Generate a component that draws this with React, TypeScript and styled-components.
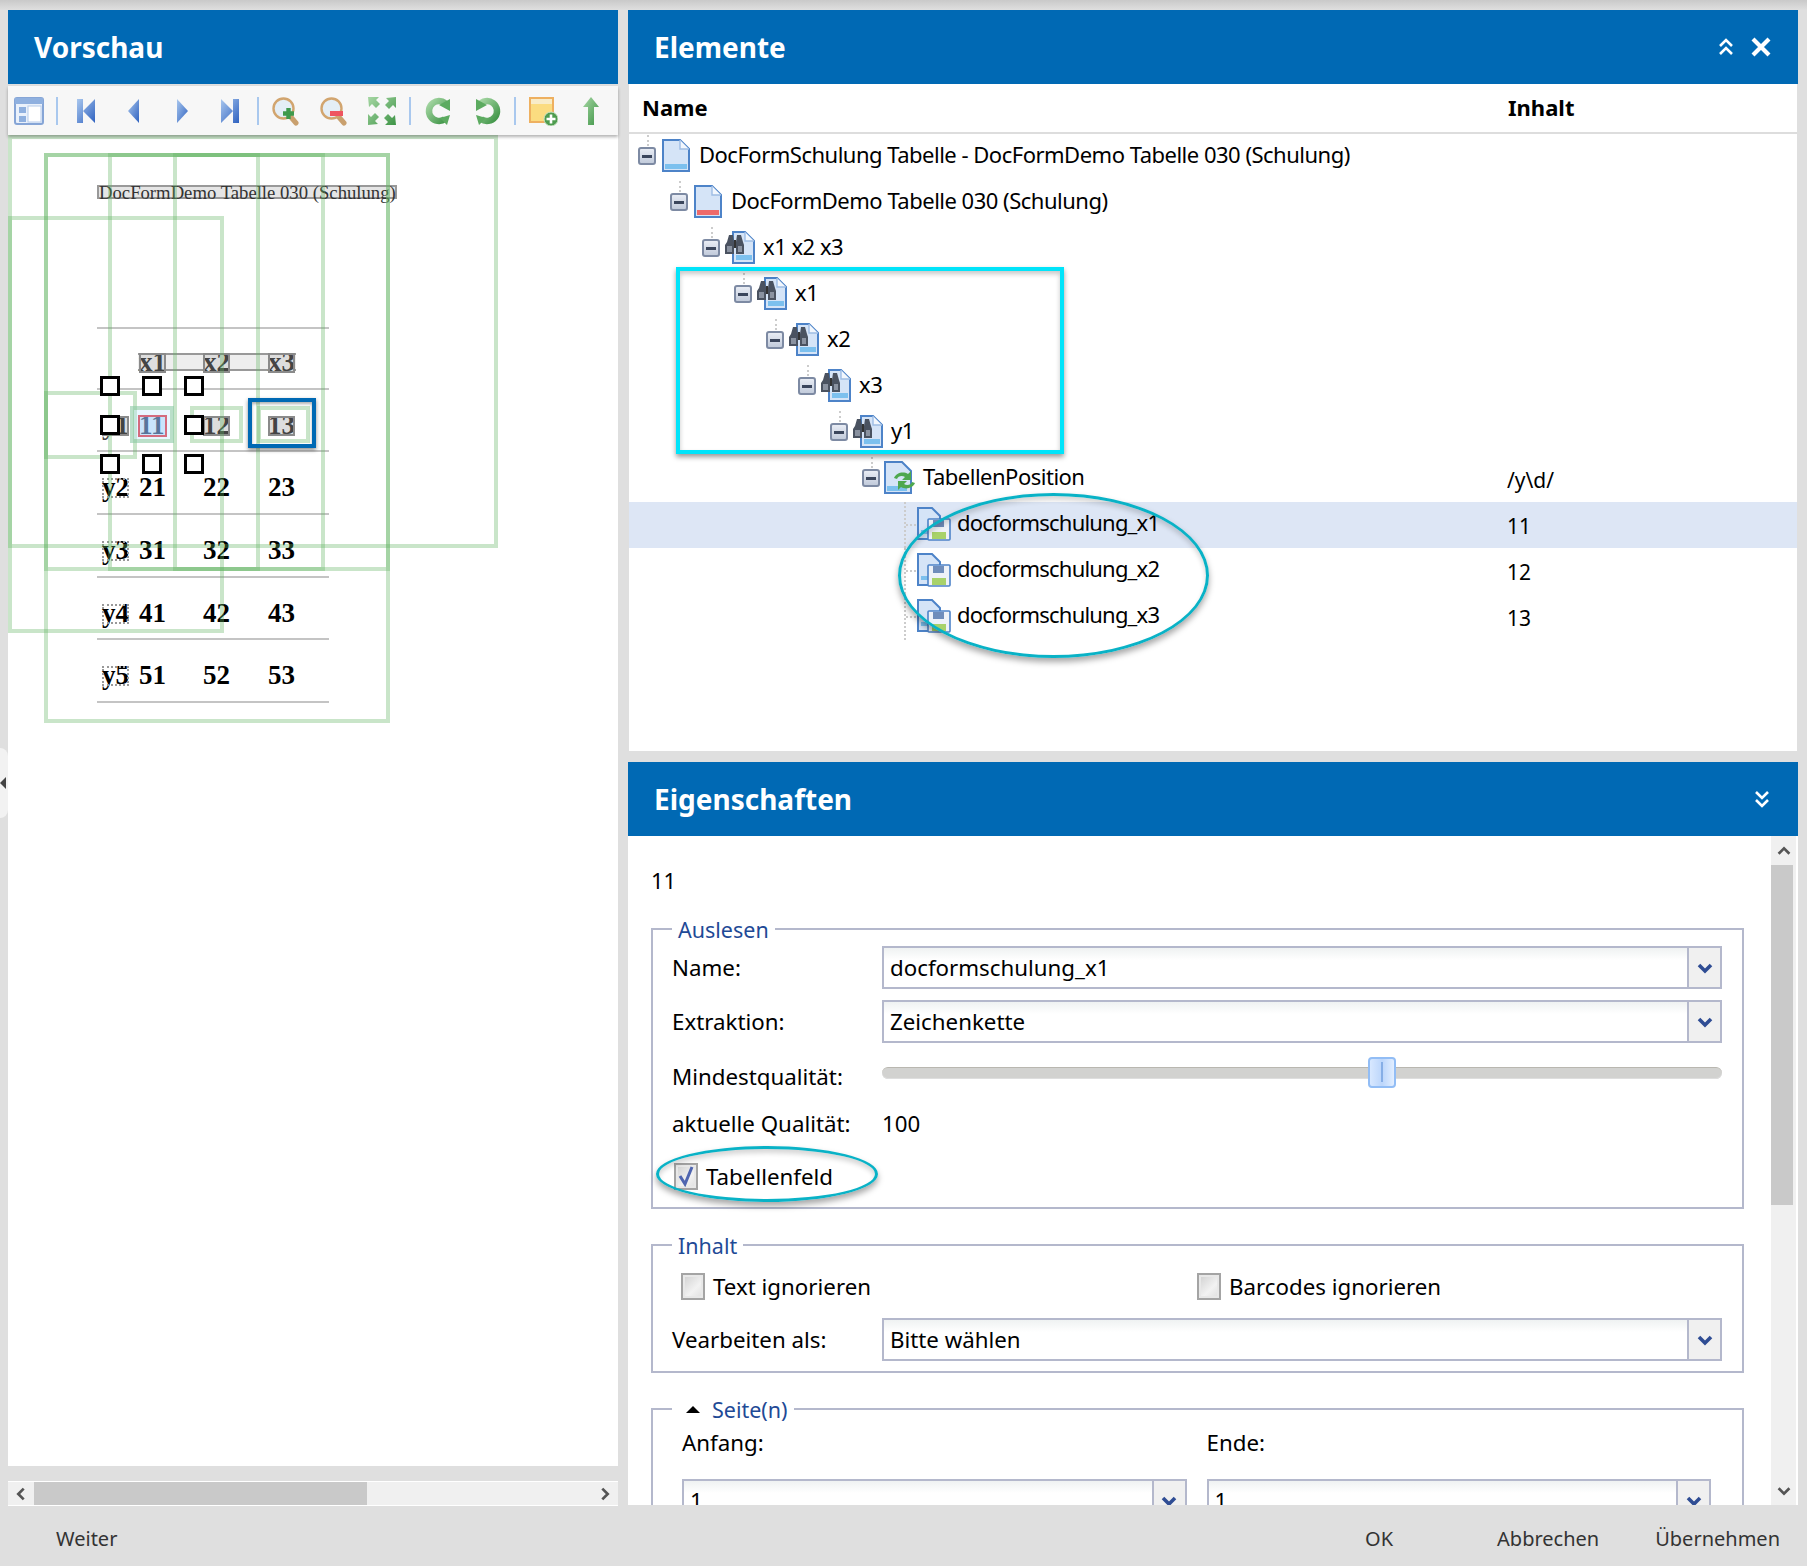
import React from "react";
import styled, { createGlobalStyle } from "styled-components";

const Global = createGlobalStyle`
  html, body { margin: 0; padding: 0; background: #dfdfdf; }
  * { box-sizing: border-box; }
  body { font-family: "Noto Sans", "Open Sans", sans-serif; color: #000; }
`;

const Root = styled.div`
  position: relative; width: 1807px; height: 1566px; overflow: hidden;
  display: flex; flex-direction: column;
  background: linear-gradient(#c9c9c9 0, #dfdfdf 10px);
`;
const Main = styled.div`display: flex; height: 1505px; padding: 10px 9px 0 8px; gap: 10px;`;
const LeftCol = styled.div`width: 610px; display: flex; flex-direction: column;`;
const RightCol = styled.div`width: 1170px; display: flex; flex-direction: column;`;
const Header = styled.div`
  height: 74px; flex: none; background: #0069b4; color: #fff; display: flex; align-items: center;
  padding: 0 26px 0 26px; font: 700 28px "Noto Sans", sans-serif; justify-content: space-between;
`;
const LowerHeader = styled(Header)`margin-top: 11px;`;
const HeaderTools = styled.div`display: flex; align-items: center; gap: 14px;`;
const Toolbar = styled.div`
  height: 49px; margin-top: 2px; flex: none; background: #f7f7f7; display: flex; align-items: center; padding-left: 6px;
  box-shadow: 0 2px 3px rgba(0,0,0,.3); position: relative; z-index: 2;
`;
const ToolIcon = styled.svg<{ $gap?: boolean }>`
  width: 30px; height: 30px; flex: none; margin-left: ${p => (p.$gap ? "18px" : "0")}; filter: blur(.4px);
`;
const ToolSep = styled.div`width: 2px; height: 28px; background: #a9c8ee; margin: 0 12.5px 0 12px; flex: none;`;
const Canvas = styled.div`position: relative; height: 1331px; flex: none; background: #fff; overflow: hidden;`;
const GreenBox = styled.div<{ $x: number; $y: number; $w: number; $h: number; $fill?: boolean }>`
  position: absolute; left: ${p => p.$x - 8}px; top: ${p => p.$y - 135}px; width: ${p => p.$w}px; height: ${p => p.$h}px;
  border: 4px solid rgba(96, 178, 96, .34); background: ${p => (p.$fill ? "rgba(190,230,255,.35)" : "transparent")};
`;
const BlueBox = styled.div`
  position: absolute; left: 240px; top: 263px; width: 68px; height: 50px; border: 4px solid #0069b4;
  box-shadow: 0 2px 4px rgba(0,0,0,.45), inset 0 2px 3px rgba(0,0,0,.3);
`;
const DocTitle = styled.div`
  position: absolute; left: 89px; top: 50px; width: 300px; height: 14px; border: 2px solid #999; background: rgba(0,0,0,.1);
  font: 18.7px/12px "Liberation Serif", serif; color: #333; white-space: nowrap; text-align: center;
`;
const Table = styled.div`position: absolute; left: 89px; top: 192px; width: 232px; font: 700 27px "Liberation Serif", serif;`;
const TableRow = styled.div<{ $top?: boolean }>`
  height: 62.67px; display: grid; grid-template-columns: 37px 64px 65px 1fr; padding-left: 5px; padding-top: ${p => (p.$top ? 24 : 26)}px;
  border-bottom: 2px solid #c4c4c4; ${p => (p.$top ? "border-top: 2px solid #c4c4c4;" : "")}
`;
const Cell = styled.div<{ $kind?: "plain" | "label" | "gray" | "sel" }>`
  width: 27px; height: 20px; line-height: 19px; white-space: nowrap;
  ${p => p.$kind === "label" ? "outline: 2px dotted #999; outline-offset: -2px;" : ""}
  ${p => p.$kind === "gray" ? "outline: 2px solid #8a8a8a; outline-offset: -2px; color: #444; background: #ddd;" : ""}
  ${p => p.$kind === "sel" ? "outline: 2px solid #e02a3a; outline-offset: -1px; color: #223a66; background: #cfe3fb;" : ""}
`;
const HeadStrip = styled.div`
  position: absolute; left: 130px; top: 218px; width: 158px; height: 18px; background: #eee; border: 2px solid #999;
  border-width: 2px 0;
`;
const Handle = styled.div<{ $x: number; $y: number }>`
  position: absolute; left: ${p => p.$x - 8}px; top: ${p => p.$y - 135}px; width: 20px; height: 20px; border: 3px solid #000; background: #fff;
`;
const HScroll = styled.div`
  height: 25px; margin-top: 15px; flex: none; background: #f0f0f0; display: flex; align-items: center; border-top: 1px solid #fff; border-bottom: 1px solid #fff;
`;
const ScrollBtn = styled.div`width: 26px; height: 100%; display: flex; align-items: center; justify-content: center; flex: none;`;
const HThumb = styled.div`width: 333px; height: 100%; background: #c9c9c9;`;
const Spacer = styled.div`flex: 1;`;

const TreePanel = styled.div`height: 667px; flex: none; background: #fff; margin-left: 1px; margin-right: 1px; position: relative;`;
const TreeHead = styled.div`
  height: 50px; display: grid; grid-template-columns: 878px 1fr; align-items: center; border-bottom: 2px solid #ddd;
  font: 700 22px "Noto Sans", sans-serif; padding: 0 0 2px 13px;
`;
const TreeHeadValue = styled.div`margin-left: -12px;`;
const TreeRow = styled.div<{ $selected?: boolean }>`
  height: 46px; display: grid; grid-template-columns: 878px 1fr; align-items: center;
  background: ${p => (p.$selected ? "#dde6f5" : "transparent")}; font-size: 22px; letter-spacing: -.5px; white-space: nowrap;
`;
const TreeName = styled.div<{ $level: number }>`
  display: flex; align-items: center; height: 100%; padding-left: ${p => 9 + p.$level * 32}px;
`;
const TreeText = styled.span<{ $tight?: boolean }>`margin-bottom: 6px; ${p => (p.$tight ? "letter-spacing: -.8px;" : "")}`;
const ToggleWrap = styled.div`
  position: relative; width: 18px; height: 18px; flex: none; border-radius: 3px; border: 2px solid #7d8aa3;
  background: linear-gradient(#e8ecf4, #c2cbdb); display: flex; align-items: center; justify-content: center; margin-bottom: 2px;
  &::before { content: ""; position: absolute; left: 7px; top: -14px; height: 11px; border-left: 2px dotted #ccc; }
  &::after { content: ""; width: 10px; height: 3px; background: #3b465c; }
`;
const NodeIcon = styled.svg`width: 32px; height: 34px; flex: none; margin: 0 7px 2px 4px; filter: blur(.3px);`;
const Connector = styled.div`
  width: 24px; height: 100%; flex: none; margin-left: 10px; position: relative;
  border-left: 2px dotted #ccc;
  &::after { content: ""; position: absolute; left: 0; top: 22px; width: 14px; border-top: 2px dotted #ccc; }
`;
const LeafIcon = styled.svg`width: 34px; height: 34px; flex: none; margin: 0 6px 2px -11px; filter: blur(.3px);`;
const TreeValue = styled.div`font-size: 21px; letter-spacing: 0; padding-top: 1px;`;

const Form = styled.div`flex: 1; position: relative; background: #fff; display: flex; overflow: hidden;`;
const FormScroll = styled.div`flex: 1; padding: 30px 27px 0 23px; min-width: 0; height: 900px;`;
const ValueLine = styled.div`height: 28px; line-height: 28px; font-size: 22px; margin-bottom: 23px;`;
const Group = styled.fieldset<{ $pb: number }>`
  margin: 0 0 24px; padding: 5px 20px ${p => p.$pb}px 19px; min-width: 0; border: 2px solid #b4b8cc;
`;
const Legend = styled.legend`
  margin-left: 0; padding: 0 6px; height: 24px; line-height: 21px; font-size: 21.5px; color: #1f4a96; display: flex; align-items: center; gap: 12px;
`;
const Triangle = styled.span`
  width: 0; height: 0; border-left: 7px solid transparent; border-right: 7px solid transparent; border-bottom: 7px solid #000; margin-left: 8px;
`;
const FormRow = styled.div<{ $h: number; $mt?: number }>`
  display: grid; grid-template-columns: 210px 1fr; align-items: center; height: ${p => p.$h}px; margin-top: ${p => p.$mt ?? 0}px; font-size: 22.3px;
`;
const Select = styled.div`
  height: 43px; border: 2px solid #b4b8cc; display: flex; align-items: center; font-size: 22.3px;
  background: linear-gradient(#eff2f2, #fff 12px); padding-left: 6px;
`;
const SelectText = styled.div`flex: 1; line-height: 38px; height: 38px;`;
const SelectBtn = styled.div`
  width: 33px; height: 100%; flex: none; background: #f0f0f0; border-left: 2px solid #b4b8cc; display: flex; align-items: center; justify-content: center;
`;
const Track = styled.div`
  position: relative; height: 12px; margin-top: -8px; border-radius: 6px; background: #d2d2d0; border-top: 1px solid #b9b7b0; box-shadow: inset 0 -1px 0 #dedede;
`;
const Thumb = styled.div`
  position: absolute; left: 486px; top: -11px; width: 28px; height: 31px; border-radius: 4px; border: 2px solid #92bdf5;
  background: linear-gradient(90deg, #d8e8ff, #bcd6fb 50%, #e2eeff); display: flex; justify-content: center; align-items: center;
  &::after { content: ""; width: 2px; height: 20px; background: #86aee6; }
`;
const CheckRow = styled.div<{ $ml?: number; $mt?: number }>`
  display: flex; align-items: center; gap: 8px; font-size: 22.3px; margin-left: ${p => p.$ml ?? 0}px; margin-top: ${p => p.$mt ?? 0}px; height: 28px;
`;
const Check = styled.div`
  width: 24px; height: 27px; flex: none; border: 2px solid #a4a4a4; background: linear-gradient(135deg, #cfcfcf, #f2f2f2 60%, #dedede);
  box-shadow: inset 0 0 0 2px #e8e8e8; display: flex; align-items: center; justify-content: center;
`;
const TwoCol = styled.div`display: grid; grid-template-columns: 1fr 1fr; column-gap: 20px; margin: 3px 11px 0 10px;`;
const CheckCols = styled.div`display: grid; grid-template-columns: 516px 1fr; margin: 10px 0 18px 9px;`;
const Label = styled.div`height: 28px; line-height: 28px; font-size: 22.3px; margin-bottom: 22px;`;
const PageCol = styled.div``;
const VScroll = styled.div`
  width: 25px; flex: none; margin-right: 2px; background: #f0f0f0; display: flex; flex-direction: column; align-items: stretch;
`;
const VBtn = styled.div`height: 29px; flex: none; display: flex; align-items: center; justify-content: center;`;
const VThumb = styled.div`height: 340px; flex: none; background: #c9c9c9; margin-right: 3px;`;

const Footer = styled.div`
  height: 61px; display: flex; align-items: center; padding: 5px 27px 0 56px; font-size: 20px; color: #333;
`;
const FooterBtn = styled.div<{ $ml: number }>`margin-left: ${p => p.$ml}px;`;

const CyanRect = styled.div`
  position: absolute; left: 676px; top: 267px; width: 388px; height: 187px; border: 4px solid #00e4fa;
  box-shadow: 0 3px 5px rgba(0,0,0,.4), inset 0 3px 5px rgba(0,0,0,.22);
`;
const Oval = styled.div<{ $x: number; $y: number; $w: number; $h: number }>`
  position: absolute; left: ${p => p.$x}px; top: ${p => p.$y}px; width: ${p => p.$w}px; height: ${p => p.$h}px; border-radius: 50%;
  border: 3px solid #09b2c6; box-shadow: 0 4px 6px rgba(0,0,0,.35), inset 0 4px 5px rgba(0,0,0,.16);
`;
const SideHandle = styled.div`
  position: absolute; left: 0; top: 748px; width: 8px; height: 70px; background: #f2f2f2; border-radius: 0 8px 8px 0;
  display: flex; align-items: center;
  &::after { content: ""; border-right: 6px solid #444; border-top: 6px solid transparent; border-bottom: 6px solid transparent; }
`;

const Chevron = ({ d = "down", c = "#2f4d94", s = 20, w = 3.6 }: { d?: "up" | "down" | "left" | "right"; c?: string; s?: number; w?: number }) => {
  const pts = { down: "4,7 10,13 16,7", up: "4,13 10,7 16,13", left: "13,4 7,10 13,16", right: "7,4 13,10 7,16" }[d];
  return <svg width={s} height={s} viewBox="0 0 20 20"><polyline points={pts} fill="none" stroke={c} strokeWidth={w} /></svg>;
};
const DoubleChev = ({ up }: { up?: boolean }) => (
  <svg width="20" height="20" viewBox="0 0 20 20" fill="none" stroke="#fff" strokeWidth="2.6">
    {up ? <><polyline points="4,9 10,3 16,9" /><polyline points="4,17 10,11 16,17" /></> : <><polyline points="4,3 10,9 16,3" /><polyline points="4,11 10,17 16,11" /></>}
  </svg>
);
const CloseX = () => (
  <svg width="22" height="22" viewBox="0 0 22 22" stroke="#fff" strokeWidth="4.2"><path d="M3 3L19 19M19 3L3 19" /></svg>
);

const BlueGrad = ({ id }: { id: string }) => (
  <defs><linearGradient id={id} x1="0" y1="0" x2="1" y2="1"><stop offset="0" stopColor="#a9c7ee" /><stop offset="1" stopColor="#2f62c0" /></linearGradient></defs>
);
const GreenGrad = ({ id }: { id: string }) => (
  <defs><linearGradient id={id} x1="0" y1="0" x2="1" y2="1"><stop offset="0" stopColor="#a6d7a4" /><stop offset="1" stopColor="#3e9446" /></linearGradient></defs>
);

const Glass = ({ minus, gap }: { minus?: boolean; gap?: boolean }) => (
  <ToolIcon viewBox="0 0 30 30" $gap={gap}>
    <path d="M19 20l6 7" stroke="#c9a06e" strokeWidth="5" strokeLinecap="round" />
    <circle cx="12.5" cy="12.5" r="10" fill="#e4eef6" stroke="#d2a56f" strokeWidth="2.4" />
    {minus
      ? <rect x="11" y="15" width="13" height="5" fill="#ee5560" />
      : <path d="M17.5 12v11M12 17.5h11" stroke="#3f9a4d" strokeWidth="4.4" />}
  </ToolIcon>
);

const Doc = ({ stripe = "#7cc0ee" }: { stripe?: string }) => (
  <NodeIcon viewBox="0 0 32 34">
    <path d="M3 1h17l9 9v22H3z" fill="#d5e4f7" stroke="#4d83c8" strokeWidth="2" />
    <path d="M20 1v9h9" fill="#f2f7fd" stroke="#9ebde4" strokeWidth="1.4" />
    <rect x="5" y="25" width="22" height="5" fill={stripe} />
  </NodeIcon>
);
const Bino = () => (
  <NodeIcon viewBox="0 0 32 34">
    <path d="M9 1h12l9 9v22H9z" fill="#d5e4f7" stroke="#4d83c8" strokeWidth="2" />
    <path d="M21 1v9h9" fill="#f2f7fd" stroke="#9ebde4" strokeWidth="1.4" />
    <rect x="12" y="24" width="16" height="5" fill="#7cc0ee" />
    <path d="M3 11l2-7h4l1 7v12H1V14zM12 11l1-7h4l2 7 1 3v9h-8z" fill="#4a5260" />
    <rect x="3" y="15" width="5" height="6" fill="#8a92a0" /><rect x="14" y="15" width="4" height="6" fill="#8a92a0" />
    <rect x="10" y="9" width="2" height="8" fill="#333" />
  </NodeIcon>
);
const DocArrows = () => (
  <NodeIcon viewBox="0 0 32 34">
    <path d="M1 1h17l9 9v22H1z" fill="#d5e4f7" stroke="#4d83c8" strokeWidth="2" />
    <rect x="3" y="25" width="20" height="5" fill="#7cc0ee" />
    <path d="M10 17c2-5 9-7 14-4l3-3v9h-9l3-3c-3-2-7-1-8 2z" fill="#4ea84f" />
    <path d="M31 22c-2 5-9 7-14 4l-3 3v-9h9l-3 3c3 2 7 1 8-2z" fill="#4ea84f" />
  </NodeIcon>
);
const DocDisk = () => (
  <LeafIcon viewBox="0 0 34 34">
    <path d="M1 1h14l8 8v23H1z" fill="#d5e4f7" stroke="#4d83c8" strokeWidth="2" />
    <rect x="4" y="23" width="10" height="4" fill="#7cc0ee" />
    <rect x="11" y="12" width="22" height="21" rx="1" fill="#eef2f8" stroke="#4d83c8" strokeWidth="1.6" />
    <rect x="16" y="13" width="11" height="7" fill="#6f8dbb" />
    <rect x="15" y="25" width="14" height="7" fill="#a8d26a" />
  </LeafIcon>
);

const rows = [
  ["y2", "21", "22", "23"], ["y3", "31", "32", "33"], ["y4", "41", "42", "43"], ["y5", "51", "52", "53"],
];
const boxes = [
  { x: 8, y: 135, w: 490, h: 413 }, { x: 44, y: 153, w: 346, h: 570 }, { x: 44, y: 153, w: 346, h: 418 },
  { x: 108, y: 153, w: 152, h: 418 }, { x: 173, y: 153, w: 152, h: 418 }, { x: 8, y: 216, w: 216, h: 417 },
  { x: 44, y: 391, w: 93, h: 68 }, { x: 190, y: 406, w: 53, h: 37 }, { x: 257, y: 406, w: 53, h: 37 },
];
const handles = [
  [100, 376], [142, 376], [184, 376], [100, 415], [184, 415], [100, 454], [142, 454], [184, 454],
];

const treeRows: { level: number; text: string; icon: React.ReactNode; value?: string }[] = [
  { level: 0, text: "DocFormSchulung Tabelle - DocFormDemo Tabelle 030 (Schulung)", icon: <Doc /> },
  { level: 1, text: "DocFormDemo Tabelle 030 (Schulung)", icon: <Doc stripe="#ee6a6a" /> },
  { level: 2, text: "x1 x2 x3", icon: <Bino /> },
  { level: 3, text: "x1", icon: <Bino /> },
  { level: 4, text: "x2", icon: <Bino /> },
  { level: 5, text: "x3", icon: <Bino /> },
  { level: 6, text: "y1", icon: <Bino /> },
  { level: 7, text: "TabellenPosition", icon: <DocArrows />, value: "/y\\d/" },
];
const leaves = [["docformschulung_x1", "11"], ["docformschulung_x2", "12"], ["docformschulung_x3", "13"]];

const Drop = ({ text }: { text: string }) => (
  <Select>
    <SelectText>{text}</SelectText>
    <SelectBtn><Chevron /></SelectBtn>
  </Select>
);

export default function App() {
  return (
    <Root>
      <Global />
      <Main>
        <LeftCol>
          <Header>Vorschau</Header>
          <Toolbar>
            <ToolIcon viewBox="0 0 30 30">
              <rect x="1" y="2" width="28" height="26" rx="2" fill="#eaf1fb" stroke="#86a5d6" strokeWidth="2" />
              <rect x="1" y="2" width="28" height="6" fill="#8fb0df" />
              <rect x="5" y="11" width="7" height="6" fill="#8fb0df" /><rect x="5" y="20" width="7" height="6" fill="#8fb0df" />
              <rect x="14" y="10" width="13" height="16" fill="#fff" stroke="#b6cbea" />
            </ToolIcon>
            <ToolSep />
            <ToolIcon viewBox="0 0 30 30"><BlueGrad id="b1" /><path d="M6 3h6v24H6zM24 3v24L12 15z" fill="url(#b1)" /></ToolIcon>
            <ToolIcon viewBox="0 0 30 30" $gap><BlueGrad id="b2" /><path d="M20 3v24L9 15z" fill="url(#b2)" /></ToolIcon>
            <ToolIcon viewBox="0 0 30 30" $gap><BlueGrad id="b3" /><path d="M10 3v24l11-12z" fill="url(#b3)" /></ToolIcon>
            <ToolIcon viewBox="0 0 30 30" $gap><BlueGrad id="b4" /><path d="M24 3h-6v24h6zM6 3v24l12-12z" fill="url(#b4)" /></ToolIcon>
            <ToolSep />
            <Glass />
            <Glass minus gap />
            <ToolIcon viewBox="0 0 30 30" $gap>
              <GreenGrad id="g1" />
              <path d="M1 1h11l-3 3 4 4-4 4-4-4-3 3zM29 1v11l-3-3-4 4-4-4 4-4-3-3zM1 29V18l3 3 4-4 4 4-4 4 3 3zM29 29H18l3-3-4-4 4-4 4 4 3-3z" fill="url(#g1)" />
            </ToolIcon>
            <ToolSep />
            <ToolIcon viewBox="0 0 30 30">
              <GreenGrad id="g2" />
              <path d="M23 9A10 10 0 1 0 21 23" fill="none" stroke="url(#g2)" strokeWidth="6.5" />
              <path d="M15 9L26 3v12zM16 22l10-3-3 10z" fill="#5cab60" />
            </ToolIcon>
            <ToolIcon viewBox="0 0 30 30" $gap>
              <GreenGrad id="g3" />
              <path d="M7 9A10 10 0 1 1 9 23" fill="none" stroke="url(#g3)" strokeWidth="6.5" />
              <path d="M15 9L4 3v12zM14 22L4 19l3 10z" fill="#5cab60" />
            </ToolIcon>
            <ToolSep />
            <ToolIcon viewBox="0 0 30 30">
              <rect x="2" y="2" width="23" height="24" fill="#fbdc80" stroke="#eeb060" strokeWidth="2" />
              <rect x="3" y="3" width="21" height="5" fill="#f8ecc8" />
              <circle cx="23" cy="23" r="7" fill="#4e9c4f" stroke="#c9e2c4" />
              <path d="M23 18.5v9M18.5 23h9" stroke="#fff" strokeWidth="2.6" />
            </ToolIcon>
            <ToolIcon viewBox="0 0 30 30" $gap>
              <GreenGrad id="g4" />
              <path d="M15 1l8 10h-5v18h-6V11H7z" fill="url(#g4)" />
            </ToolIcon>
          </Toolbar>
          <Canvas>
            <DocTitle>DocFormDemo Tabelle 030 (Schulung)</DocTitle>
            <HeadStrip />
            <Table>
              <TableRow $top>
                <span />
                <Cell $kind="gray">x1</Cell><Cell $kind="gray">x2</Cell><Cell $kind="gray">x3</Cell>
              </TableRow>
              <TableRow>
                <Cell $kind="gray">y1</Cell>
                <Cell $kind="sel">11</Cell><Cell $kind="gray">12</Cell><Cell $kind="gray">13</Cell>
              </TableRow>
              {rows.map(r => (
                <TableRow key={r[0]}>
                  <Cell $kind="label">{r[0]}</Cell>
                  <Cell>{r[1]}</Cell><Cell>{r[2]}</Cell><Cell>{r[3]}</Cell>
                </TableRow>
              ))}
            </Table>
            {boxes.map((b, i) => <GreenBox key={i} $x={b.x} $y={b.y} $w={b.w} $h={b.h} />)}
            <GreenBox $x={130} $y={406} $w={44} $h={37} $fill />
            <BlueBox />
            {handles.map(([x, y]) => <Handle key={`${x}-${y}`} $x={x} $y={y} />)}
          </Canvas>
          <HScroll>
            <ScrollBtn><Chevron d="left" c="#555" s={18} w={3} /></ScrollBtn>
            <HThumb />
            <Spacer />
            <ScrollBtn><Chevron d="right" c="#555" s={18} w={3} /></ScrollBtn>
          </HScroll>
        </LeftCol>
        <RightCol>
          <Header>
            Elemente
            <HeaderTools><DoubleChev up /><CloseX /></HeaderTools>
          </Header>
          <TreePanel>
            <TreeHead>
              <div>Name</div>
              <TreeHeadValue>Inhalt</TreeHeadValue>
            </TreeHead>
            {treeRows.map(r => (
              <TreeRow key={r.level}>
                <TreeName $level={r.level}>
                  <ToggleWrap />
                  {r.icon}
                  <TreeText>{r.text}</TreeText>
                </TreeName>
                {r.value && <TreeValue>{r.value}</TreeValue>}
              </TreeRow>
            ))}
            {leaves.map((l, i) => (
              <TreeRow key={l[0]} $selected={i === 0}>
                <TreeName $level={8}>
                  <Connector />
                  <DocDisk />
                  <TreeText $tight>{l[0]}</TreeText>
                </TreeName>
                <TreeValue>{l[1]}</TreeValue>
              </TreeRow>
            ))}
          </TreePanel>
          <LowerHeader>
            Eigenschaften
            <HeaderTools><DoubleChev /></HeaderTools>
          </LowerHeader>
          <Form>
            <FormScroll>
              <ValueLine>11</ValueLine>
              <Group $pb={17}>
                <Legend>Auslesen</Legend>
                <FormRow $h={43}><div>Name:</div><Drop text="docformschulung_x1" /></FormRow>
                <FormRow $h={43} $mt={11}><div>Extraktion:</div><Drop text="Zeichenkette" /></FormRow>
                <FormRow $h={47} $mt={10}><div>Mindestqualität:</div><Track><Thumb /></Track></FormRow>
                <FormRow $h={47}><div>aktuelle Qualität:</div><div>100</div></FormRow>
                <CheckRow $ml={2} $mt={15}>
                  <Check><svg width="18" height="22" viewBox="0 0 18 22"><path d="M3 11l5 8 7-17" fill="none" stroke="#4f65b0" strokeWidth="3" /></svg></Check>
                  Tabellenfeld
                </CheckRow>
              </Group>
              <Group $pb={11}>
                <Legend>Inhalt</Legend>
                <CheckCols>
                  <CheckRow><Check />Text ignorieren</CheckRow>
                  <CheckRow><Check />Barcodes ignorieren</CheckRow>
                </CheckCols>
                <FormRow $h={42}><div>Vearbeiten als:</div><Drop text="Bitte wählen" /></FormRow>
              </Group>
              <Group $pb={8}>
                <Legend><Triangle />Seite(n)</Legend>
                <TwoCol>
                  <PageCol><Label>Anfang:</Label><Drop text="1" /></PageCol>
                  <PageCol><Label>Ende:</Label><Drop text="1" /></PageCol>
                </TwoCol>
              </Group>
            </FormScroll>
            <VScroll>
              <VBtn><Chevron d="up" c="#555" s={18} w={3} /></VBtn>
              <VThumb />
              <Spacer />
              <VBtn><Chevron d="down" c="#555" s={18} w={3} /></VBtn>
            </VScroll>
          </Form>
        </RightCol>
      </Main>
      <Footer>
        Weiter
        <Spacer />
        <FooterBtn $ml={0}>OK</FooterBtn>
        <FooterBtn $ml={104}>Abbrechen</FooterBtn>
        <FooterBtn $ml={56}>Übernehmen</FooterBtn>
      </Footer>
      <CyanRect />
      <Oval $x={898} $y={493} $w={311} $h={165} />
      <Oval $x={656} $y={1146} $w={222} $h={56} />
      <SideHandle />
    </Root>
  );
}
